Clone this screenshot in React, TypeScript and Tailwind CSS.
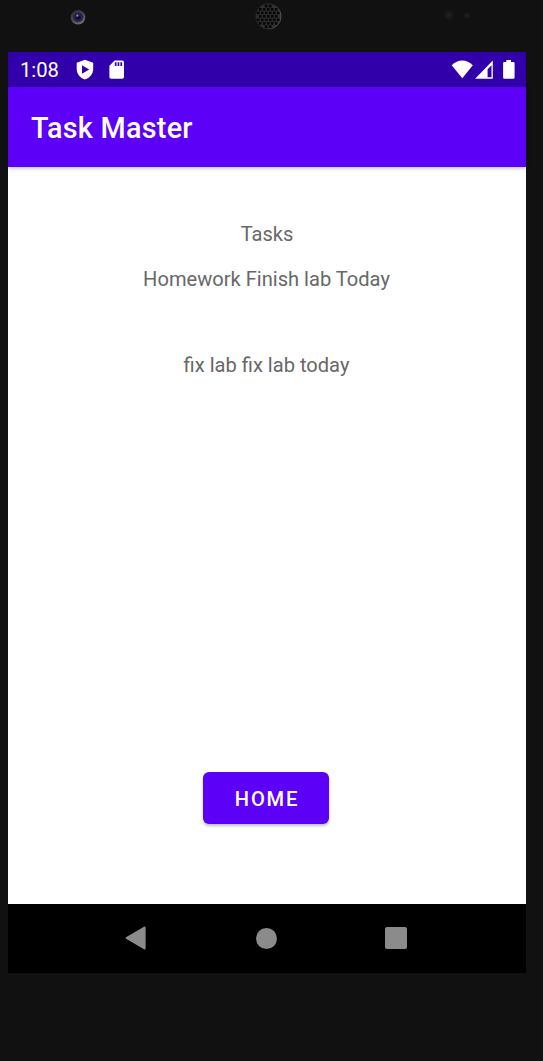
const grille = [
  [0, 0], [4, 0], [-4, 0], [8, 0], [-8, 0],
  [2, 3.5], [-2, 3.5], [6, 3.5], [-6, 3.5], [10, 3.5], [-10, 3.5],
  [2, -3.5], [-2, -3.5], [6, -3.5], [-6, -3.5], [10, -3.5], [-10, -3.5],
  [0, 7], [4, 7], [-4, 7], [8, 7], [-8, 7],
  [0, -7], [4, -7], [-4, -7], [8, -7], [-8, -7],
  [2, 10.3], [-2, 10.3], [2, -10.3], [-2, -10.3],
];

function Bezel() {
  return (
    <svg className="block h-[52px] w-[543px]" viewBox="0 0 543 52" aria-hidden="true">
      <defs>
        <linearGradient id="ring" x1="0" y1="0" x2="0.6" y2="1">
          <stop offset="0" stopColor="#242424" />
          <stop offset="1" stopColor="#707070" />
        </linearGradient>
        <linearGradient id="rim" x1="0" y1="0" x2="1" y2="0.3">
          <stop offset="0" stopColor="#181818" />
          <stop offset="0.7" stopColor="#2a2a2a" />
          <stop offset="1" stopColor="#606060" />
        </linearGradient>
        <radialGradient id="sensor">
          <stop offset="0" stopColor="#222" />
          <stop offset="1" stopColor="#111" />
        </radialGradient>
        <radialGradient id="lens">
          <stop offset="0" stopColor="#1c1050" />
          <stop offset="0.6" stopColor="#241a50" />
          <stop offset="1" stopColor="#3c3c3e" />
        </radialGradient>
      </defs>
      <circle cx="78" cy="17.3" r="7.3" fill="url(#ring)" />
      <circle cx="78" cy="17" r="5.6" fill="url(#lens)" />
      <circle cx="78.3" cy="17.5" r="1.8" fill="#0b0720" />
      <circle cx="77.4" cy="15.7" r="1.1" fill="#9a91d5" />
      <circle cx="268.3" cy="16.3" r="12.7" fill="#303030" stroke="url(#rim)" strokeWidth="0.8" />
      {grille.map(([x, y], i) => (
        <rect key={i} x={266.8 + x} y={14.9 + y} width="2.8" height="2.8" rx="0.6" fill="#070707" />
      ))}
      <circle cx="449" cy="15" r="6" fill="url(#sensor)" />
      <circle cx="467" cy="15.5" r="4" fill="url(#sensor)" />
    </svg>
  );
}

function StatusBar() {
  return (
    <div className="flex h-[35px] shrink-0 items-center bg-[#3100aa] pl-3 text-white">
      <span className="w-[56px] pt-[2px] text-[20.2px] leading-none">1:08</span>
      <svg className="h-[35px] w-[50px]" viewBox="76 52 50 35" fill="currentColor" aria-hidden="true">
        <path
          fillRule="evenodd"
          d="M84.9 59.7 93.2 62.8V69C93.2 74 89.8 78 84.9 79.5 80 78 76.7 74 76.7 69V62.8ZM82 65.2V73.7L89.2 69.4Z"
        />
        <path
          fillRule="evenodd"
          d="M114.6 60.5H122.2Q124 60.5 124 62.3V77Q124 78.8 122.2 78.8H111.2Q109.4 78.8 109.4 77V65.8ZM114.8 62.3V66H116.5V62.3ZM117.6 62.3V66H119.3V62.3ZM120.4 62.3V66H122.1V62.3Z"
        />
      </svg>
      <svg className="mr-2.5 ml-auto h-[35px] w-[66px]" viewBox="450 52 66 35" fill="currentColor" aria-hidden="true">
        <path d="M451.7 65.2C457.7 58.9 466.8 58.9 472.8 65.2L462.3 78.2Z" />
        <path fillRule="evenodd" d="M492.8 60.5V78.7H475.1ZM491.5 65.3 487.6 69.2V77.2H491.5Z" />
        <path d="M506.4 60.1H511V62H513.3Q514.6 62 514.6 63.3V77.4Q514.6 78.7 513.3 78.7H504.4Q503.1 78.7 503.1 77.4V63.3Q503.1 62 504.4 62H506.4Z" />
      </svg>
    </div>
  );
}

function NavigationBar() {
  return (
    <nav className="flex h-[69px] shrink-0 items-center bg-black pb-px pl-[117px] text-[#8b8b8b]">
      <button aria-label="Back">
        <svg className="block h-6 w-[21px]" viewBox="0 0 21 24" fill="currentColor">
          <path d="M1 11.3 19 .8Q20.6 0 20.6 1.7V22.3Q20.6 24 19 23.2L1 12.7Q0 12 1 11.3Z" />
        </svg>
      </button>
      <button aria-label="Home screen" className="ml-[110px] size-[21px] rounded-full bg-[#8b8b8b]" />
      <button aria-label="Overview" className="ml-[108px] size-[22px] rounded-[2px] bg-[#8b8b8b]" />
    </nav>
  );
}

export default function App() {
  return (
    <div className="h-[1061px] w-[543px] overflow-hidden bg-[#111111] font-['Roboto',sans-serif]">
      <Bezel />
      <div className="ml-2 flex h-[921px] w-[518px] flex-col bg-white">
        <StatusBar />
        <header className="flex h-20 shrink-0 items-center bg-[#5c00f8] pt-[3px] pl-[23px] shadow-[0_1px_4px_rgba(0,0,0,0.3)]">
          <h1 className="text-[28.8px] leading-none font-medium tracking-[0.26px] text-white">Task Master</h1>
        </header>
        <main className="flex grow flex-col items-center pt-[55px] text-[20.1px] leading-6 text-[#686868]">
          <p>Tasks</p>
          <p className="mt-[21px] mr-px">Homework Finish lab Today</p>
          <p className="mt-[62px] mr-px">fix lab fix lab today</p>
          <button className="mt-auto mr-[2px] mb-20 flex h-[52px] w-[126px] items-center justify-center rounded-[6px] bg-[#5c00f8] pt-[2px] pl-[2px] text-[20.15px] font-medium tracking-[1.8px] text-white shadow-[0_2px_3px_rgba(0,0,0,0.25)]">
            HOME
          </button>
        </main>
        <NavigationBar />
      </div>
    </div>
  );
}
